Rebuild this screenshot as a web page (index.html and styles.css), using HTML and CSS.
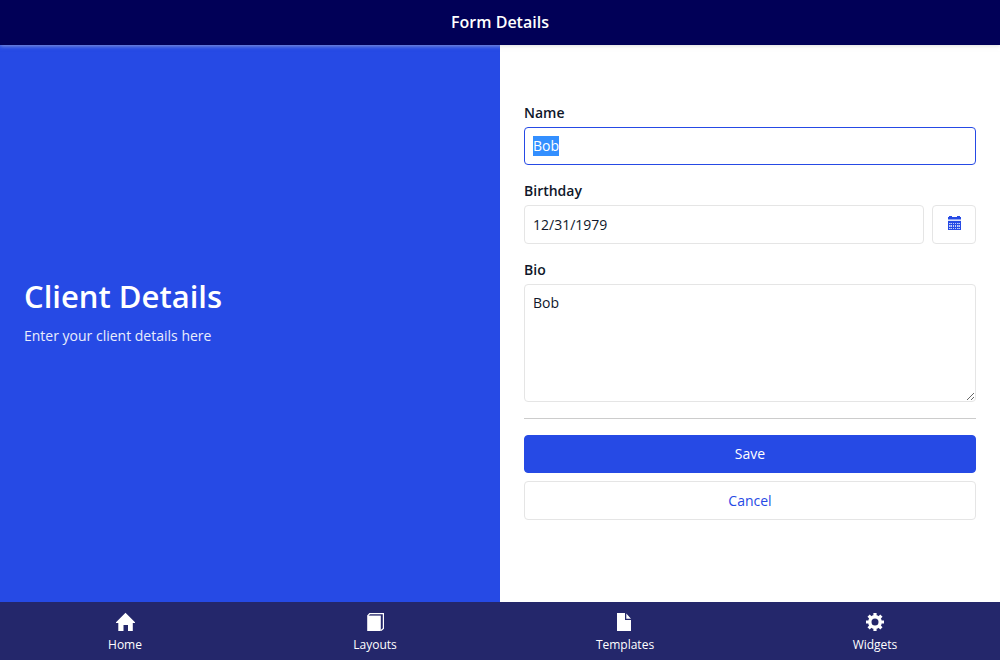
FILE: index.html
```html
<!DOCTYPE html>
<html lang="en">
<head>
<meta charset="utf-8">
<meta name="viewport" content="width=device-width, initial-scale=1">
<title>Form Details</title>
<link rel="stylesheet" href="styles.css">
</head>
<body>
<header class="app-header"><h1 class="app-title">Form Details</h1></header>
<main class="content">
  <section class="intro">
    <h2 class="intro-title">Client Details</h2>
    <p class="intro-text">Enter your client details here</p>
  </section>
  <form class="form">
    <div class="field">
      <label class="label" for="name">Name</label>
      <input class="control" id="name" type="text" value="Bob" autocomplete="off">
    </div>
    <div class="field">
      <label class="label" for="birthday">Birthday</label>
      <div class="date-row">
        <input class="control" id="birthday" type="text" value="12/31/1979" autocomplete="off">
        <button class="button button-outline button-date" type="button" aria-label="Choose date">
          <svg class="date-icon" viewBox="0 0 13 14" aria-hidden="true"><path fill="currentColor" d="M0 1h1V0h3v1h5V0h3v1h1v2H0zM0 5h13v9H0z"/><path fill="#8fa3f2" d="M0 3h13v1H0z"/><path fill="#dfe5fc" d="M0 4h13v1H0z"/><path fill="#c3cdf9" d="M1 7h3v1H1zm4 0h1v1H5zm2 0h1v1H7zm2 0h3v1H9zM1 9h3v1H1zm4 0h1v1H5zm2 0h1v1H7zm2 0h3v1H9zM1 10h3v1H1zm4 0h1v1H5zm2 0h1v1H7zm2 0h3v1H9zM1 12h3v1H1zm4 0h1v1H5zm2 0h1v1H7zm2 0h3v1H9z"/><path stroke="currentColor" stroke-opacity=".4" d="M2.500 7v6M10.500 7v6"/></svg>
        </button>
      </div>
    </div>
    <div class="field">
      <label class="label" for="bio">Bio</label>
      <textarea class="control control-bio" id="bio">Bob</textarea>
    </div>
    <hr class="divider">
    <div class="actions">
      <button class="button button-primary" type="submit">Save</button>
      <button class="button button-outline" type="button">Cancel</button>
    </div>
  </form>
</main>
<nav class="tabs" aria-label="Main">
  <a class="tab" href="#home">
    <svg class="tab-icon" viewBox="0 0 20 20" aria-hidden="true"><path fill="currentColor" d="M10.500 .8 20 10.300V11h-2.200v8H13v-6H8.500v6H3.300v-8H1v-.7z"/></svg>
    <span>Home</span>
  </a>
  <a class="tab" href="#layouts">
    <svg class="tab-icon" viewBox="0 0 20 20" aria-hidden="true"><path fill="currentColor" d="M2.200 3.600H15.800V19H2.200z"/><path fill="none" stroke="currentColor" stroke-width="1.200" d="M2.600 4 4.700 1.600H18.400V16.500L16 18.500"/></svg>
    <span>Layouts</span>
  </a>
  <a class="tab" href="#templates">
    <svg class="tab-icon" viewBox="0 0 20 20" aria-hidden="true"><path fill="currentColor" d="M2 1h8v7h6v11H2zM11.300 1.500 16 6.700h-4.700z"/></svg>
    <span>Templates</span>
  </a>
  <a class="tab" href="#widgets">
    <svg class="tab-icon" viewBox="0 0 20 20" aria-hidden="true"><g fill="none" stroke="currentColor"><circle cx="10" cy="10" r="5.200" stroke-width="3.400"/><path stroke-width="3.200" d="M10 1v3M10 16v3M1 10h3M16 10h3M3.600 3.600l2.200 2.200M14.200 14.200l2.200 2.200M3.600 16.400l2.200-2.200M14.200 5.800l2.200-2.200"/></g></svg>
    <span>Widgets</span>
  </a>
</nav>
<script src="script.js"></script>
</body>
</html>
```
FILE: styles.css
```css
* { box-sizing: border-box; }

body {
  margin: 0;
  min-height: 100vh;
  display: flex;
  flex-direction: column;
  background: #fff;
  color: #0f172a;
  font-family: "Open Sans", "Noto Sans", sans-serif;
  font-size: 14px;
  line-height: 20px;
}

h1, h2, p { margin: 0; }

.app-header {
  padding: 10px 16px 11px;
  background: #010057;
  color: #fff;
  text-align: center;
  box-shadow: 0 1px 4px rgba(200, 200, 200, .6);
  z-index: 1;
}
.app-title { font-size: 16px; line-height: 24px; font-weight: 600; }

.content { flex: 1; display: grid; grid-template-columns: 1fr 1fr; }

.intro, .form {
  display: flex;
  flex-direction: column;
  justify-content: center;
  padding: 0 24px 24px;
}
.intro { gap: 8px; padding-bottom: 28px; background: #264ae5; color: #fff; }
.intro-title { font-size: 31px; line-height: 44px; font-weight: 600; }
.intro-text { color: #e9edfc; }

.form { gap: 16px; }
.field { display: flex; flex-direction: column; gap: 4px; }
.label { font-weight: 600; }

.control {
  width: 100%;
  margin: 0;
  padding: 8px;
  border: 1px solid #e5e5e5;
  border-radius: 4px;
  background: #fff;
  color: #0f172a;
  font: inherit;
}
.control:focus { outline: none; border-color: #264ae5; }
.control::selection { background: #338fff; color: #fff; }
.control-bio { height: 118px; resize: vertical; }

.date-row { display: flex; gap: 8px; }

.button {
  padding: 8px;
  border: 1px solid #264ae5;
  border-radius: 4px;
  font: inherit;
  cursor: pointer;
}
.button-primary { background: #264ae5; color: #fff; }
.button-outline { min-height: 39px; border-color: #e5e5e5; background: #fff; color: #264ae5; }
.button-date { flex: 0 0 44px; display: flex; align-items: flex-start; justify-content: center; padding: 10px 8px; }
.date-icon { width: 13px; height: 14px; }

.divider { width: 100%; margin: 0; border: 0; border-top: 1px solid #ccc; }
.actions { display: flex; flex-direction: column; gap: 8px; }

.tabs { display: grid; grid-template-columns: repeat(4, 1fr); background: #24276b; }
.tab {
  display: flex;
  flex-direction: column;
  align-items: center;
  gap: 4px;
  padding: 10px 8px 6px;
  color: #fff;
  font-size: 12px;
  line-height: 18px;
  text-decoration: none;
}
.tab-icon { width: 20px; height: 20px; }
```
FILE: script.js
```js
const nameInput = document.getElementById("name");
nameInput.focus();
nameInput.select();
```
